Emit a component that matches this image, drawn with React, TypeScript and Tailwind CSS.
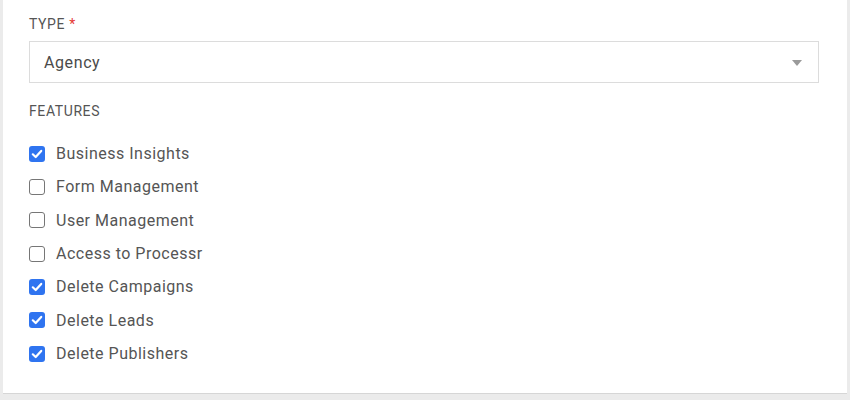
type Feature = { label: string; checked: boolean };

const features: Feature[] = [
  { label: 'Business Insights', checked: true },
  { label: 'Form Management', checked: false },
  { label: 'User Management', checked: false },
  { label: 'Access to Processr', checked: false },
  { label: 'Delete Campaigns', checked: true },
  { label: 'Delete Leads', checked: true },
  { label: 'Delete Publishers', checked: true },
];

function Checkbox({ checked }: { checked: boolean }) {
  if (checked) {
    return (
      <span className="flex h-4 w-4 items-center justify-center rounded-[3px] bg-[#2f74f0]">
        <svg viewBox="0 0 16 16" className="h-4 w-4">
          <path d="M3.8 8.3 L6.7 11 L12.2 4.9" fill="none" stroke="#fff" strokeWidth="2.2" strokeLinecap="round" strokeLinejoin="round" />
        </svg>
      </span>
    );
  }
  return <span className="block h-4 w-4 rounded-[3px] border-[1.5px] border-[#767676] bg-white" />;
}

export default function App() {
  return (
    <div className="h-[400px] bg-[#ebebeb] px-[3px] font-['Roboto',sans-serif]">
      <div className="h-[394px] border-b border-[#d6d6d6] bg-white pl-[26px] pr-[28px] pt-[16px]">
        <label className="block text-[14px] leading-4 tracking-[0.6px] text-[#555]">
          TYPE <span className="text-[#e53935]">*</span>
        </label>
        <div className="mt-[9px] flex h-[42px] items-center justify-between border border-[#dcdcdc] bg-white pl-[14px] pr-[16px] pt-[2px]">
          <span className="text-[16px] tracking-[0.6px] text-[#4a4a4a]">Agency</span>
          <svg viewBox="0 0 10 6" className="h-[6px] w-[10px]">
            <path d="M0 0 H10 L5 6 Z" fill="#9a9a9a" />
          </svg>
        </div>
        <div className="mt-[20px] text-[14px] leading-4 tracking-[0.6px] text-[#555]">FEATURES</div>
        <div className="mt-[18px] flex flex-col">
          {features.map((f) => (
            <div key={f.label} className="flex h-[33.33px] items-center gap-[11px]">
              <Checkbox checked={f.checked} />
              <span className="pt-[1px] text-[16px] tracking-[0.5px] text-[#555]">{f.label}</span>
            </div>
          ))}
        </div>
      </div>
    </div>
  );
}
